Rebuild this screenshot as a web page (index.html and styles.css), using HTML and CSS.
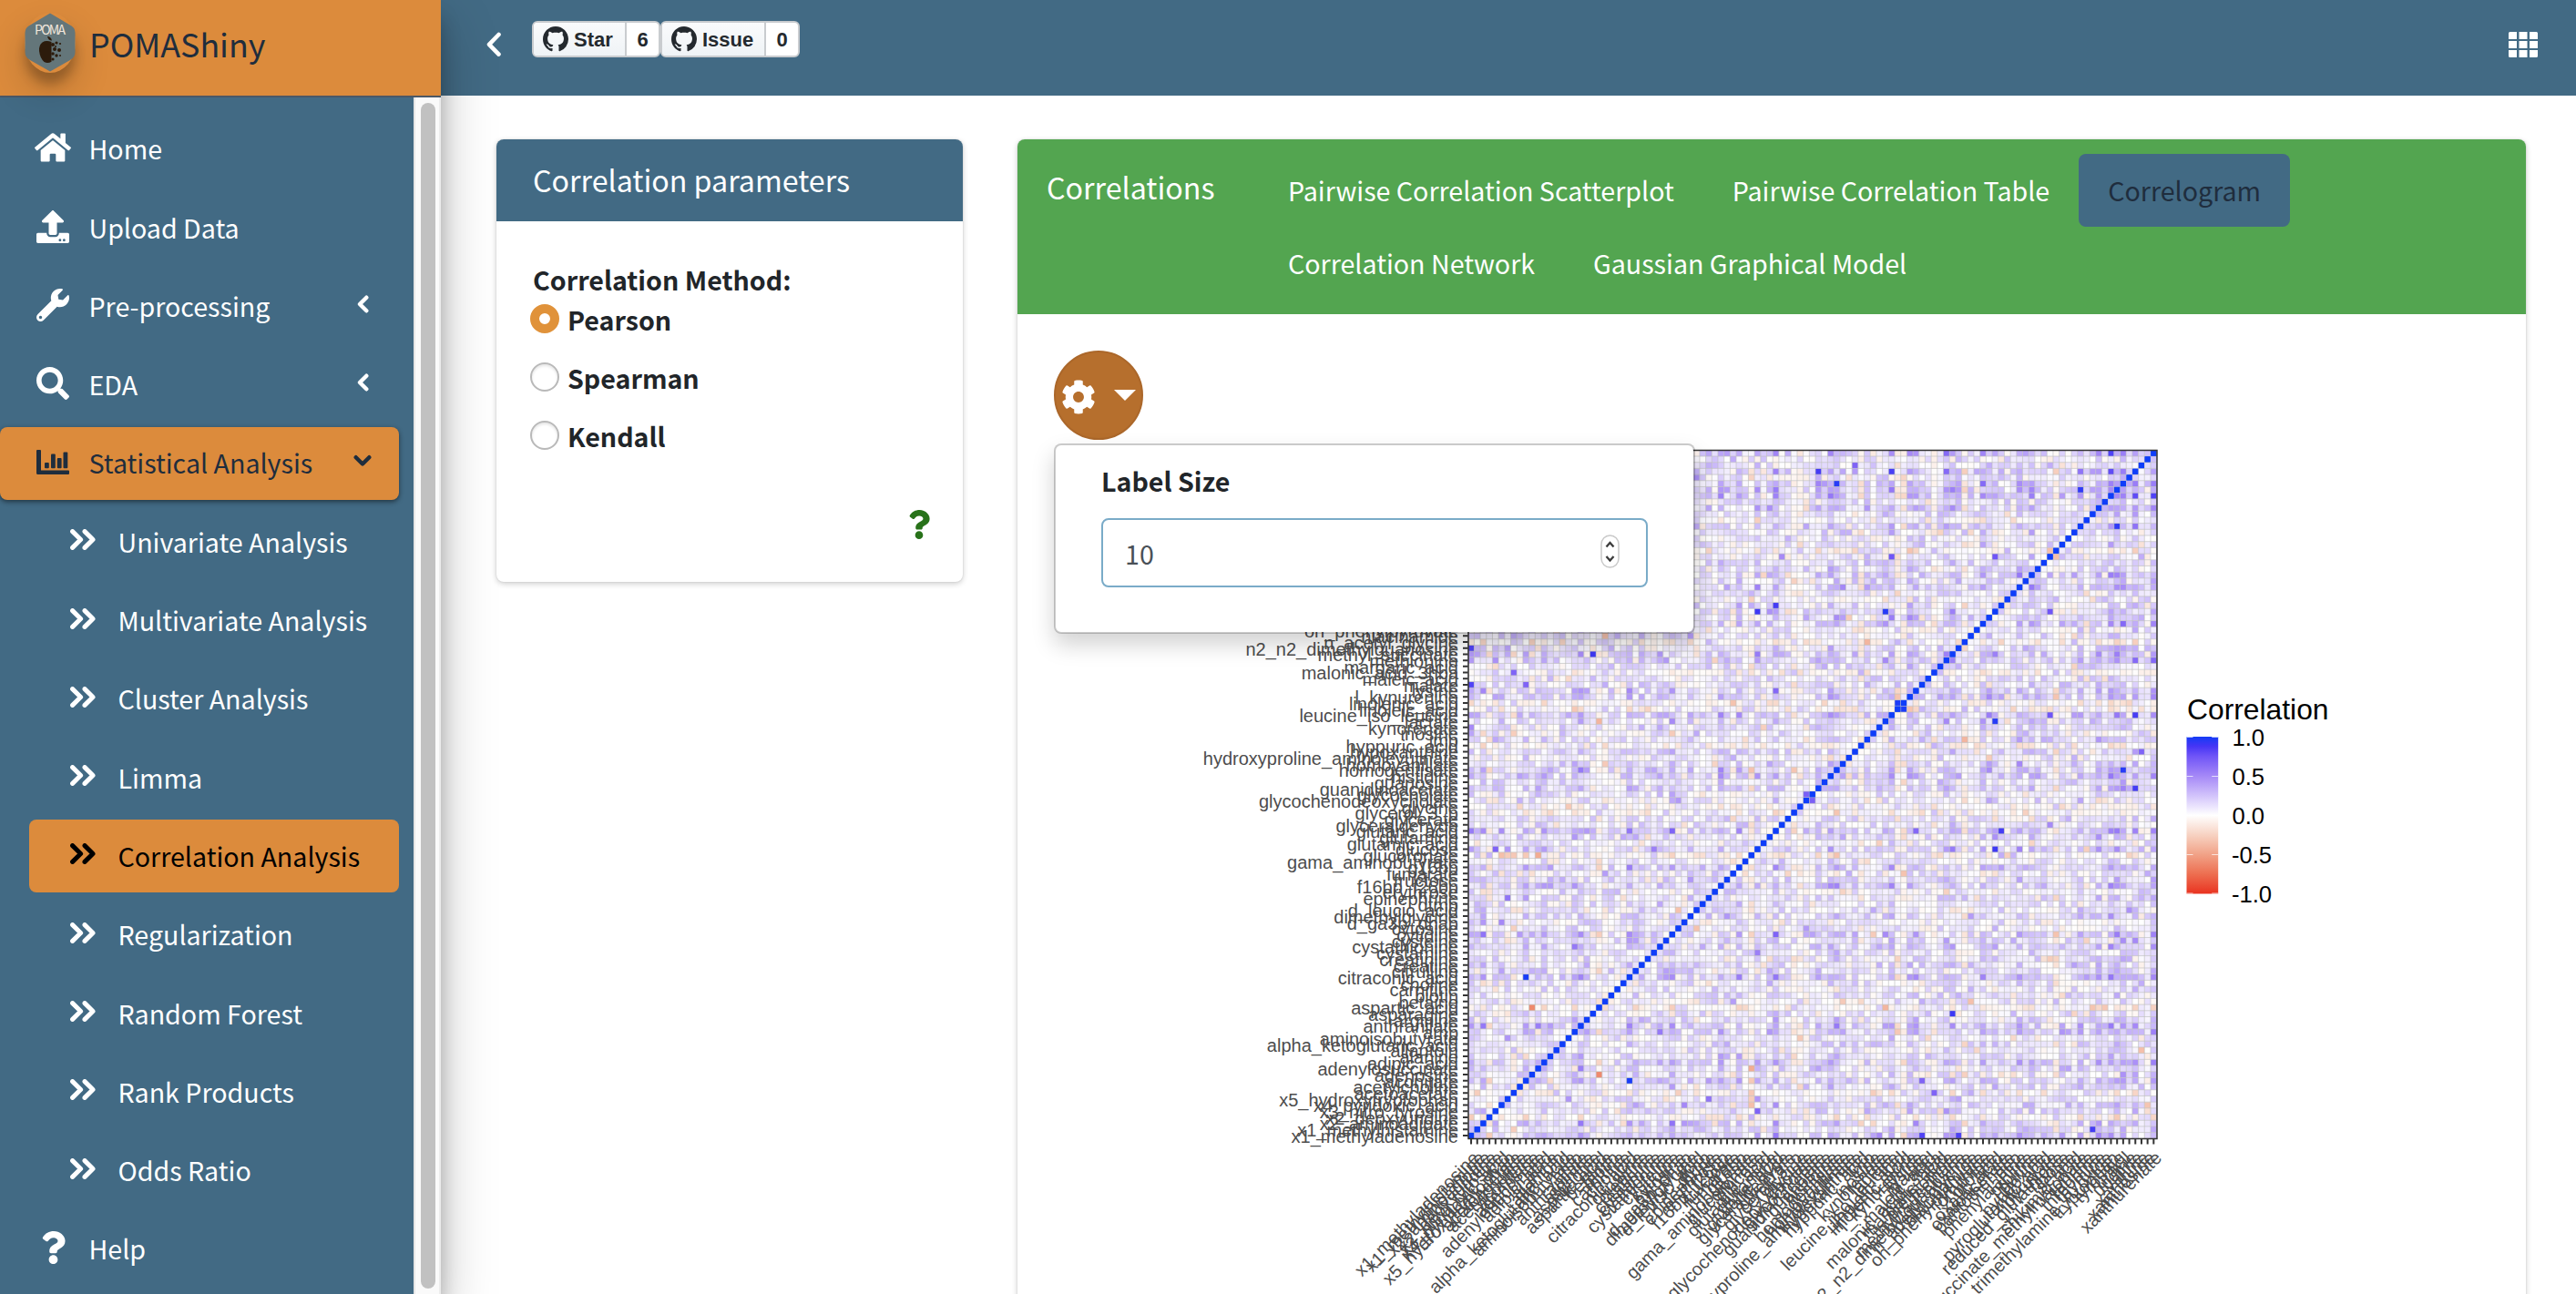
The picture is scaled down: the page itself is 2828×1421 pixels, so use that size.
FILE: index.html
```
<!DOCTYPE html>
<html lang="en">
<head>
<meta charset="utf-8">
<title>POMAShiny</title>
<link rel="stylesheet" href="styles.css">
</head>
<body>
<svg class="defs" width="0" height="0" aria-hidden="true">
  <symbol id="i-home" viewBox="0 0 576 512"><path d="M280.37 148.26L96 300.11V464a16 16 0 0 0 16 16l112.06-.29a16 16 0 0 0 15.92-16V368a16 16 0 0 1 16-16h64a16 16 0 0 1 16 16v95.64a16 16 0 0 0 16 16.05L464 480a16 16 0 0 0 16-16V300L295.67 148.26a12.19 12.19 0 0 0-15.3 0zM571.6 251.47L488 182.56V44.05a12 12 0 0 0-12-12h-56a12 12 0 0 0-12 12v72.61L318.47 43a48 48 0 0 0-61 0L4.34 251.47a12 12 0 0 0-1.6 16.9l25.5 31A12 12 0 0 0 45.15 301l235.22-193.74a12.19 12.19 0 0 1 15.3 0L530.9 301a12 12 0 0 0 16.9-1.6l25.5-31a12 12 0 0 0-1.7-16.93z"/></symbol>
  <symbol id="i-upload" viewBox="0 0 512 512"><path d="M296 384h-80c-13.3 0-24-10.7-24-24V192h-87.7c-17.8 0-26.7-21.5-14.1-34.1L242.3 5.7c7.5-7.5 19.8-7.5 27.3 0l152.2 152.2c12.6 12.6 3.7 34.1-14.1 34.1H320v168c0 13.3-10.7 24-24 24zm216-8v112c0 13.3-10.7 24-24 24H24c-13.3 0-24-10.7-24-24V376c0-13.3 10.7-24 24-24h136v8c0 30.9 25.1 56 56 56h80c30.9 0 56-25.1 56-56v-8h136c13.3 0 24 10.7 24 24zm-124 88c0-11-9-20-20-20s-20 9-20 20 9 20 20 20 20-9 20-20zm64 0c0-11-9-20-20-20s-20 9-20 20 9 20 20 20 20-9 20-20z"/></symbol>
  <symbol id="i-wrench" viewBox="0 0 512 512"><path d="M507.73 109.1c-2.24-9.03-13.54-12.09-20.12-5.51l-74.36 74.36-67.88-11.31-11.31-67.88 74.36-74.36c6.62-6.62 3.43-17.9-5.66-20.16-47.38-11.74-99.55.91-136.58 37.93-39.64 39.64-50.55 97.1-34.05 147.2L18.74 402.76c-24.99 24.99-24.99 65.51 0 90.5 24.99 24.99 65.51 24.99 90.5 0l213.21-213.21c50.12 16.71 107.47 5.68 147.37-34.22 37.07-37.07 49.7-89.32 37.91-136.73zM64 472c-13.25 0-24-10.75-24-24 0-13.26 10.75-24 24-24s24 10.74 24 24c0 13.25-10.75 24-24 24z"/></symbol>
  <symbol id="i-search" viewBox="0 0 512 512"><path d="M505 442.7L405.3 343c-4.5-4.5-10.6-7-17-7H372c27.6-35.3 44-79.7 44-128C416 93.1 322.9 0 208 0S0 93.1 0 208s93.1 208 208 208c48.3 0 92.7-16.4 128-44v16.3c0 6.4 2.5 12.5 7 17l99.7 99.7c9.4 9.4 24.6 9.4 33.9 0l28.3-28.3c9.4-9.4 9.4-24.6.1-34zM208 336c-70.7 0-128-57.2-128-128 0-70.7 57.2-128 128-128 70.7 0 128 57.2 128 128 0 70.7-57.2 128-128 128z"/></symbol>
  <symbol id="i-chart" viewBox="0 0 36 36"><path d="M1 5h3a1 1 0 0 1 1 1v21.500h30a1 1 0 0 1 1 1v2.500a1 1 0 0 1-1 1H1.500a1.500 1.500 0 0 1-1.500-1.500V6a1 1 0 0 1 1-1z"/><rect x="9" y="19" width="4.800" height="6.200" rx="1"/><rect x="16" y="9.500" width="4.800" height="15.700" rx="1"/><rect x="22.800" y="14" width="4.800" height="11.200" rx="1"/><rect x="29.500" y="7.500" width="4.800" height="17.700" rx="1"/></symbol>
  <symbol id="i-double" viewBox="0 0 28 23"><path d="M2.600 2.600l9 8.900-9 8.900M16 2.600l9 8.900-9 8.900" fill="none" stroke="currentColor" stroke-width="5" stroke-linejoin="round" stroke-linecap="round"/></symbol>
  <symbol id="i-left" viewBox="0 0 14 20"><path d="M11.300 2.700L4 10l7.300 7.300" fill="none" stroke="currentColor" stroke-width="4.400" stroke-linejoin="round" stroke-linecap="round"/></symbol>
  <symbol id="i-down" viewBox="0 0 20 14"><path d="M2.700 3.200L10 10.500l7.300-7.300" fill="none" stroke="currentColor" stroke-width="4.400" stroke-linejoin="round" stroke-linecap="round"/></symbol>
  <symbol id="i-question" viewBox="0 0 384 512"><path d="M202.021 0C122.202 0 70.503 32.703 29.914 91.026c-7.363 10.58-5.093 25.086 5.178 32.874l43.138 32.709c10.373 7.865 25.132 6.026 33.253-4.148 25.049-31.381 43.63-49.449 82.757-49.449 30.764 0 68.816 19.799 68.816 49.631 0 22.552-18.617 34.134-48.993 51.164-35.423 19.86-82.299 44.576-82.299 106.405V320c0 13.255 10.745 24 24 24h72.471c13.255 0 24-10.745 24-24v-5.773c0-42.86 125.268-44.645 125.268-160.627C377.504 66.256 286.902 0 202.021 0zM192 373.459c-38.196 0-69.271 31.075-69.271 69.271 0 38.195 31.075 69.27 69.271 69.27s69.271-31.075 69.271-69.271-31.075-69.27-69.271-69.27z"/></symbol>
  <symbol id="i-cog" viewBox="0 0 512 512"><path d="M487.4 315.7l-42.6-24.6c4.3-23.2 4.3-47 0-70.2l42.6-24.6c4.9-2.8 7.1-8.6 5.5-14-11.1-35.6-30-67.8-54.7-94.6-3.8-4.1-10-5.1-14.8-2.3L380.8 110c-17.9-15.4-38.5-27.3-60.8-35.1V25.8c0-5.6-3.9-10.5-9.4-11.7-36.7-8.2-74.3-7.8-109.2 0-5.5 1.2-9.4 6.1-9.4 11.7V75c-22.2 7.900-42.8 19.8-60.8 35.1L88.7 85.5c-4.9-2.8-11-1.900-14.8 2.3-24.7 26.7-43.6 58.900-54.7 94.6-1.7 5.4.6 11.2 5.5 14L67.3 221c-4.300 23.2-4.300 47 0 70.2l-42.6 24.6c-4.900 2.8-7.1 8.6-5.5 14 11.1 35.6 30 67.8 54.7 94.6 3.8 4.1 10 5.1 14.8 2.3l42.6-24.6c17.9 15.4 38.5 27.3 60.8 35.1v49.2c0 5.6 3.9 10.5 9.4 11.700 36.7 8.2 74.3 7.8 109.2 0 5.5-1.2 9.4-6.1 9.4-11.700v-49.2c22.2-7.9 42.8-19.8 60.8-35.1l42.6 24.6c4.9 2.8 11 1.900 14.8-2.3 24.7-26.7 43.6-58.900 54.7-94.6 1.5-5.5-.7-11.3-5.6-14.1zM256 336c-44.1 0-80-35.9-80-80s35.9-80 80-80 80 35.9 80 80-35.9 80-80 80z"/></symbol>
  <symbol id="i-github" viewBox="0 0 16 16"><path d="M8 0C3.58 0 0 3.58 0 8c0 3.54 2.29 6.53 5.47 7.59.4.07.55-.17.55-.38 0-.19-.01-.82-.01-1.49-2.01.37-2.53-.49-2.69-.94-.09-.23-.48-.94-.82-1.13-.28-.15-.68-.52-.01-.53.63-.01 1.08.58 1.23.82.72 1.21 1.87.87 2.33.66.07-.52.28-.87.51-1.07-1.78-.2-3.64-.89-3.64-3.95 0-.87.31-1.59.82-2.15-.08-.2-.36-1.02.08-2.12 0 0 .67-.21 2.2.82.64-.18 1.32-.27 2-.27s1.36.09 2 .27c1.53-1.04 2.2-.82 2.2-.82.44 1.1.16 1.92.08 2.12.51.56.82 1.27.82 2.15 0 3.07-1.87 3.75-3.65 3.95.29.25.54.73.54 1.48 0 1.07-.01 1.93-.01 2.2 0 .21.15.46.55.38A8.01 8.01 0 0 0 16 8c0-4.42-3.58-8-8-8z"/></symbol>
  <symbol id="i-grid" viewBox="0 0 32 28"><path d="M0 1.500Q0 0 1.500 0H9v8H0zM11.500 0h9v8h-9zM23 0h7.500Q32 0 32 1.500V8h-9zM0 10h9v8H0zM11.500 10h9v8h-9zM23 10h9v8h-9zM0 20h9v8H1.500Q0 28 0 26.500zM11.500 20h9v8h-9zM23 20h9v6.500q0 1.500-1.500 1.500H23z"/></symbol>
</svg>

<div class="app">
  <aside class="sidebar">
    <a class="brand">
      <span class="brand-logo">
        <svg viewBox="0 0 56 66" width="56" height="66">
          <path d="M28 .5L49 13Q55.500 16 55.500 22V43Q55.500 49 50 52L28 64.500 6 52Q.5 49 .5 43V22Q.5 16 7 13z" fill="#64767a"/>
          <text x="28" y="24" text-anchor="middle" textLength="34" class="logo-text">POMA</text>
          <path d="M25 26q4 0 5 4.500-4 0-5-4.500zM29.500 32q-6-2-10 .5-4 3-3.500 9.500 1 8 5.500 12 4 2 8-.3z" fill="#2c1b0c"/>
          <g fill="#2c1b0c"><circle cx="31" cy="35" r="2"/><circle cx="35" cy="33" r="1.600"/><circle cx="39" cy="34" r="1.100"/><circle cx="33" cy="40" r="2"/><circle cx="38" cy="41" r="2"/><circle cx="31" cy="45" r="1.800"/><circle cx="35" cy="47" r="1.700"/><circle cx="39" cy="47" r="1"/><circle cx="31" cy="51" r="1.600"/><circle cx="34" cy="37" r="1"/></g>
        </svg>
      </span>
      <span class="brand-name">POMAShiny</span>
    </a>
    <div class="side-body">
      <nav class="menu">
        <a class="item"><span class="ico"><svg width="40" height="36"><use href="#i-home"/></svg></span><span>Home</span></a>
        <a class="item"><span class="ico"><svg width="36" height="36"><use href="#i-upload"/></svg></span><span>Upload Data</span></a>
        <a class="item"><span class="ico"><svg width="36" height="36"><use href="#i-wrench"/></svg></span><span>Pre-processing</span><svg class="caret" width="14" height="20"><use href="#i-left"/></svg></a>
        <a class="item"><span class="ico"><svg width="36" height="36"><use href="#i-search"/></svg></span><span>EDA</span><svg class="caret" width="14" height="20"><use href="#i-left"/></svg></a>
        <a class="item open"><span class="ico"><svg width="36" height="36"><use href="#i-chart"/></svg></span><span>Statistical Analysis</span><svg class="caret caret-down" width="20" height="14"><use href="#i-down"/></svg></a>
        <a class="item sub"><svg class="dbl" width="28" height="23"><use href="#i-double"/></svg><span>Univariate Analysis</span></a>
        <a class="item sub"><svg class="dbl" width="28" height="23"><use href="#i-double"/></svg><span>Multivariate Analysis</span></a>
        <a class="item sub"><svg class="dbl" width="28" height="23"><use href="#i-double"/></svg><span>Cluster Analysis</span></a>
        <a class="item sub"><svg class="dbl" width="28" height="23"><use href="#i-double"/></svg><span>Limma</span></a>
        <a class="item sub active"><svg class="dbl" width="28" height="23"><use href="#i-double"/></svg><span>Correlation Analysis</span></a>
        <a class="item sub"><svg class="dbl" width="28" height="23"><use href="#i-double"/></svg><span>Regularization</span></a>
        <a class="item sub"><svg class="dbl" width="28" height="23"><use href="#i-double"/></svg><span>Random Forest</span></a>
        <a class="item sub"><svg class="dbl" width="28" height="23"><use href="#i-double"/></svg><span>Rank Products</span></a>
        <a class="item sub"><svg class="dbl" width="28" height="23"><use href="#i-double"/></svg><span>Odds Ratio</span></a>
        <a class="item"><span class="ico"><svg width="27" height="36"><use href="#i-question"/></svg></span><span>Help</span></a>
      </nav>
      <div class="scroll-track"><div class="scroll-thumb"></div></div>
    </div>
  </aside>

  <div class="page">
    <header class="topbar">
      <svg class="back" width="18" height="28" viewBox="0 0 18 28"><path d="M14.500 3L4 13.800l10.500 10.800" fill="none" stroke="currentColor" stroke-width="4.600" stroke-linecap="round" stroke-linejoin="round"/></svg>
      <div class="badges">
        <div class="badge-gh"><span class="gh-label"><svg width="28" height="28"><use href="#i-github"/></svg>Star</span><span class="gh-count">6</span></div>
        <div class="badge-gh"><span class="gh-label gh-issue"><svg width="28" height="28"><use href="#i-github"/></svg>Issue</span><span class="gh-count">0</span></div>
      </div>
      <svg class="apps" width="32" height="28"><use href="#i-grid"/></svg>
    </header>

    <main class="content">
      <section class="card params">
        <h3 class="params-head">Correlation parameters</h3>
        <div class="params-body">
          <div class="field-label">Correlation Method:</div>
          <label class="radio"><span class="dot on"></span>Pearson</label>
          <label class="radio"><span class="dot"></span>Spearman</label>
          <label class="radio"><span class="dot"></span>Kendall</label>
          <svg class="help" width="24" height="32"><use href="#i-question"/></svg>
        </div>
      </section>

      <section class="card result">
        <div class="tabs-head">
          <h3 class="tabs-title">Correlations</h3>
          <ul class="tabs">
            <li>Pairwise Correlation Scatterplot</li>
            <li>Pairwise Correlation Table</li>
            <li class="on">Correlogram</li>
            <li>Correlation Network</li>
            <li>Gaussian Graphical Model</li>
          </ul>
        </div>
        <div class="result-body">
          <div class="dropdown">
            <button class="gear" type="button"><svg width="38" height="38"><use href="#i-cog"/></svg><span class="tri"></span></button>
            <div class="popup">
              <div class="popup-label">Label Size</div>
              <div class="number"><span>10</span>
                <svg class="spin" width="22" height="38" viewBox="0 0 22 38"><rect x="1" y="1" width="19" height="35" rx="9.500" fill="#fff" stroke="#c9c9c9" stroke-width="1.500"/><path d="M6.500 13.500l4-4.500 4 4.500M6.500 24l4 4.500 4-4.500" fill="none" stroke="#3c3c3c" stroke-width="2.300"/></svg>
              </div>
            </div>
          </div>
          <svg id="plot" class="plot" width="1656" height="938" viewBox="1117 483 1656 938">
            <defs>
              <linearGradient id="scale" x1="0" y1="0" x2="0" y2="1">
                <stop offset="0" stop-color="#143cf5"/><stop offset=".06" stop-color="#4535f5"/><stop offset=".125" stop-color="#7055f7"/><stop offset=".25" stop-color="#a588f7"/><stop offset=".375" stop-color="#d2c3fb"/><stop offset=".5" stop-color="#fff"/><stop offset=".625" stop-color="#f7d2c2"/><stop offset=".75" stop-color="#f1a287"/><stop offset=".875" stop-color="#ed6e50"/><stop offset="1" stop-color="#e93320"/>
              </linearGradient>
            </defs>
            <g id="cells"></g>
            <path class="frame" d="M1612 494.500H2368V1250.500H1612z"/>
            <path id="ticks" class="ticks"/>
            <g id="ylabels" class="axis"></g>
            <g id="xlabels" class="axis"></g>
            <g class="legend">
              <text x="2401" y="790" font-size="31.800">Correlation</text>
              <rect x="2400.500" y="809" width="34.700" height="172.500" fill="url(#scale)"/>
              <path class="legend-ticks" d="M2400.500 809.500h7m20.700 0h7M2400.500 852.500h7m20.700 0h7M2400.500 895.500h7m20.700 0h7M2400.500 938.500h7m20.700 0h7M2400.500 981h7m20.700 0h7"/>
              <text x="2450.500" y="819">1.0</text><text x="2450.500" y="862">0.5</text><text x="2450.500" y="905">0.0</text><text x="2450" y="948">-0.5</text><text x="2450" y="991">-1.0</text>
            </g>
          </svg>
        </div>
      </section>
    </main>
  </div>
</div>
<script src="plot.js"></script>
</body>
</html>
```
FILE: styles.css
```
* { box-sizing: border-box; }
body {
  margin: 0;
  width: 2828px;
  height: 1421px;
  overflow: hidden;
  font-family: "Noto Sans CJK SC", "Noto Sans", sans-serif;
  font-size: 28.620px;
  line-height: 48px;
  color: #212529;
  background: #fff;
}
h3, ul { margin: 0; padding: 0; font-weight: 400; list-style: none; }
svg { display: block; fill: currentColor; flex: none; }
.defs { position: absolute; }
.app { display: flex; width: 2828px; height: 1421px; overflow: hidden; }

/* sidebar */
.sidebar {
  position: relative;
  z-index: 2;
  display: flex;
  flex-direction: column;
  width: 484px;
  height: 1421px;
  flex: none;
  background: #426a84;
  box-shadow: 0 28px 56px rgba(0,0,0,.25), 0 20px 20px rgba(0,0,0,.22);
}
.brand {
  display: flex;
  align-items: flex-start;
  height: 107px;
  padding: 14px 0 0 27px;
  background: #dc8b3c;
  border-bottom: 2px solid #4b5866;
}
.brand-logo {
  width: 56px;
  height: 66px;
  border-radius: 50%;
  box-shadow: 0 20px 40px rgba(0,0,0,.19), 0 12px 12px rgba(0,0,0,.23);
}
.brand-name { margin: 7px 0 0 15px; font-size: 35.800px; line-height: 52px; color: #1f2d3d; }
.logo-text { font-size: 14px; fill: #f1e6dc; }
.side-body { display: flex; flex: 1; min-height: 0; }
.menu { display: flex; flex-direction: column; gap: 6.300px; width: 454px; padding: 16.800px 16px 0 0; }
.item {
  display: flex;
  align-items: center;
  flex: none;
  height: 80px;
  padding: 0 33px 0 38px;
  color: #fff;
  border-radius: 8px;
  white-space: nowrap;
}
.item > span:not(.ico) { margin-top: -1px; }
.ico { display: flex; justify-content: center; width: 40px; margin: -3px 19.500px 0 0; }
.caret { margin: -5px 0 0 auto; }
.caret-down { margin-right: -3px; }
.open { color: #1f2d3d; background: #dc8b3c; box-shadow: 0 2px 6px rgba(0,0,0,.24), 0 2px 4px rgba(0,0,0,.3); }
.sub { margin-left: 32px; padding-left: 44.500px; }
.dbl { margin: -5px 25px 0 0; }
.active { color: #000; background: #dc8b3c; }
.scroll-track { width: 30px; padding: 6px 6px 6px 6px; background: #fafafa; border-left: 2px solid #e6e6e6; border-right: 2px solid #ececec; }
.scroll-thumb { width: 16px; height: 1302px; border-radius: 8px; background: #c1c1c1; }

/* top bar */
.page { flex: 1; min-width: 0; }
.topbar { display: flex; align-items: flex-start; height: 105px; padding: 0 42px 0 49px; color: #fff; background: #426a84; }
.back { margin-top: 35px; }
.badges { display: flex; gap: 0; margin: 23px 0 0 33px; font: bold 22px/36px "Liberation Sans", Arial, sans-serif; color: #24292e; }
.badge-gh { display: flex; height: 40px; background: #fff; border: 2px solid #c9cccf; border-radius: 6px; overflow: hidden; }
.gh-label { display: flex; align-items: center; gap: 6px; width: 102px; padding: 1px 0 0 10px; background: linear-gradient(#fafbfc, #eff3f6); border-right: 2px solid #c9cccf; }
.gh-label svg { margin-top: -2px; }
.gh-issue { width: 114px; }
.gh-count { width: 35px; padding-top: 1px; text-align: center; }
.apps { margin: 35px 0 0 auto; }

/* cards */
.content { display: flex; align-items: flex-start; gap: 60px; padding: 48px 55px 0 61px; }
.card { border-radius: 8px; background: #fff; box-shadow: 0 0 2px rgba(0,0,0,.125), 0 2px 6px rgba(0,0,0,.2); }
.params { width: 512px; height: 486px; }
.params-head { height: 90px; padding: 20px 40px 0; font-size: 32.200px; line-height: 48px; color: #fff; background: #426a84; border-radius: 8px 8px 0 0; }
.params-body { display: flex; flex-direction: column; padding: 40px 37px 0; font-weight: 700; }
.field-label { height: 44px; padding-left: 3px; }
.radio { display: flex; align-items: center; height: 64px; margin-bottom: 0; }
.radio:first-of-type { margin-top: -8px; }
.dot { width: 32px; height: 32px; margin: -2px 9px 0 0; border: 2px solid #b9b9b9; border-radius: 50%; background: #fff; box-shadow: inset 0 2px 3px rgba(0,0,0,.1); }
.dot.on { border: 10.500px solid #e0923a; box-shadow: none; }
.help { align-self: flex-end; margin: 49px -1px 0 0; color: #28721a; }

.result { width: 1656px; height: 1400px; }
.tabs-head { display: flex; height: 192px; padding: 16px 0 0 32px; color: #fff; background: #53a550; border-radius: 8px 8px 0 0; }
.tabs-title { width: 233px; padding-top: 12px; font-size: 32.200px; line-height: 48px; }
.tabs { display: flex; flex-wrap: wrap; align-content: flex-start; width: 1390px; }
.tabs li { height: 80px; padding: 16px 32px 0; line-height: 48px; border-radius: 8px; white-space: nowrap; }
.tabs .on { color: #1f2d3d; background: #426a84; }
.result-body { padding-top: 40px; }
.dropdown { position: relative; width: 98px; height: 98px; margin-left: 40px; }
.gear { display: flex; align-items: center; width: 98px; height: 98px; padding: 4px 0 0 6px; color: #fff; background: #b66f2d; border: 2px solid #ab672a; border-radius: 50%; }
.tri { margin: -4px 0 0 20px; border: 12px solid transparent; border-top-color: #fff; border-bottom: 0; }
.popup {
  position: absolute;
  left: 0;
  top: 102px;
  z-index: 3;
  width: 704px;
  height: 209px;
  padding: 16px 50px;
  background: #fff;
  background-clip: padding-box;
  border: 2px solid rgba(0,0,0,.2);
  border-radius: 8px;
  box-shadow: 0 12px 24px rgba(0,0,0,.175);
}
.popup-label { height: 64px; font-weight: 700; margin-top: -1px; padding-bottom: 1px; }
.number { display: flex; align-items: center; width: 600px; height: 76px; margin-top: 1px; padding: 0 28px 0 24px; border: 2px solid #7aabc8; border-radius: 8px; color: #495057; }
.number span { margin-top: 1px; }
.spin { margin: -2px 0 0 auto; }

/* correlogram */
.plot { font-family: "Liberation Sans", Arial, sans-serif; overflow: hidden; }
.frame { fill: none; stroke: #333; stroke-width: 1.500; }
.ticks { fill: none; stroke: #333; stroke-width: 2; }
.axis { font-size: 20px; fill: #4d4d4d; }
.legend { font-size: 25.600px; fill: #000; }
.legend-ticks { fill: none; stroke: #fff; stroke-width: 1; opacity: .7; }
```
FILE: plot.js
```
const names = `x1_methyladenosine x1_methylhistamine x2_aminoadipate x2_deoxyuridine x3_nitro_tyrosine x4_pyridoxic_acid x5_hydroxytryptophan acetoacetate acetylcholine aconitate adenosine adenylosuccinate adipic_acid alanine allantoin alpha_ketoglutaric_acid aminoisobutyrate amp anthranilate arginine asparagine aspartic_acid betaine biotin carnitine choline citraconic_acid citrulline creatine creatinine cystamine cystathionine cysteine cytidine cytosine d_ga3p_dhap dimethylglycine d_leucic_acid dtmp epinephrine erythrose f16bp_f26bp fructose fumarate g16bp gama_aminobutyrate glucoronate glucose glutamic_acid glutamine glutaric_acid glyceraldehyde glycerate glycerol_3_p glycine glycochenodeoxycholate glycocholate guanidinoacetate guanosine histidine homogentisate homovanillate hydroxyproline_aminolevulinate hypoxanthine hyppuric_acid imp inosine kynorenate lactate leucine_iso_leucine linoleic_acid linolenic_acid l_kynurenine lysine malate maleic_acid malonic_acid_3hba margaric_acid methionine methyl_succinate n2_n2_dimethylguanosine n_acetyl_glycine niacinamide oh_phenylpyruvate ornithine orotate oxalic_acid oxaloacetate pantothenate pep phenylalanine proline purine pyridoxine pyroglutamic_acid pyruvate reduced_glutathione ribose serine shikimic_acid succinate_methylmalonate taurine threonine thymine trimethylamine_n_oxide tryptophan tyrosine uracil uridine valine xanthine xanthosine xanthurenate`.split(' ');
const N = names.length, X0 = 1611.7, Y0 = 1250.3, P = 6.69;

// Colour scale stops over correlation -1 … 1
const stops = [[-1, 233, 51, 32], [-.75, 237, 110, 80], [-.5, 241, 162, 135], [-.25, 247, 210, 194], [0, 255, 255, 255],
  [.25, 210, 195, 251], [.5, 165, 136, 247], [.75, 112, 85, 247], [.9, 62, 56, 245], [1, 15, 61, 250]];
function color(v) {
  let k = 1;
  while (k < stops.length - 1 && v > stops[k][0]) k++;
  const a = stops[k - 1], b = stops[k], t = (v - a[0]) / (b[0] - a[0]);
  return 'rgb(' + [1, 2, 3].map(j => Math.round(a[j] + (b[j] - a[j]) * t)).join(',') + ')';
}

let seed = 20117;
function rnd() {
  seed = (seed + 0x6D2B79F5) | 0;
  let t = Math.imul(seed ^ (seed >>> 15), 1 | seed);
  t = (t + Math.imul(t ^ (t >>> 7), 61 | t)) ^ t;
  return ((t ^ (t >>> 14)) >>> 0) / 4294967296;
}
const gauss = () => Math.sqrt(-2 * Math.log(rnd() + 1e-9)) * Math.cos(6.2832 * rnd());

// Metabolite loadings: strongly co-varying group, opposing group, and the rest
const strong = new Set([0, 2, 9, 12, 17, 18, 26, 31, 33, 41, 44, 47, 50, 57, 59, 60, 69, 72, 73, 78, 79, 84, 90, 92, 100, 103, 105, 106, 107, 109, 112]);
const inverse = new Set([3, 7, 21, 46, 53, 54, 64, 70, 71, 76, 81, 96]);
const load = names.map((_, i) => (strong.has(i) ? .46 + .12 * rnd() : inverse.has(i) ? -.2 - .1 * rnd() : .02 + .3 * rnd()) + (i > 104 && strong.has(i) ? .12 : 0));
const load2 = names.map(() => gauss() * .17);
const fixed = { '9,26': .98, '10,21': -.62, '2,33': .6, '60,107': .95, '57,109': .88, '69,109': .87, '100,106': .93, '105,112': .85,
  '69,95': .75, '86,95': .75, '68,86': .95, '50,87': .88, '47,86': .9, '20,79': .9, '0,80': .85, '7,76': .68, '9,74': .68, '4,47': .68,
  '63,110': .68, '1,102': .88, '70,71': .97, '55,56': .7, '0,74': .85, '105,109': .8, '5,46': -.35, '6,46': -.28, '7,46': -.3, '11,46': -.45,
  '6,39': .6, '5,35': .5, '11,18': .55, '95,96': -.35 };
const svg = [];
for (let i = 0; i < N; i++) {
  for (let j = 0; j <= i; j++) {
    let v = i === j ? 1 : .055 + load[i] * load[j] + load2[i] * load2[j] + gauss() * .11;
    if (i !== j) v = Math.max(-.4, Math.min(.7, v));
    if (fixed[j + ',' + i] !== undefined) v = fixed[j + ',' + i];
    const c = color(v);
    svg.push([i, j, c]);
    if (i !== j) svg.push([j, i, c]);
  }
}
const grid = [];
for (let k = 0; k <= N; k++) {
  grid.push(`M${(X0 + k * P).toFixed(2)} ${(Y0 - N * P).toFixed(2)}V${Y0}M${X0} ${(Y0 - k * P).toFixed(2)}H${(X0 + N * P).toFixed(2)}`);
}
const rect = ([c, r, f], inset) => `<rect x="${(X0 + c * P + inset).toFixed(2)}" y="${(Y0 - (r + 1) * P + inset).toFixed(2)}" width="${P - 2 * inset}" height="${P - 2 * inset}" fill="${f}"/>`;
document.getElementById('cells').innerHTML =
  svg.map(s => rect(s, 0)).join('') +
  `<path d="${grid.join('')}" fill="none" stroke="#bebebe" stroke-width=".9" opacity=".72"/>` +
  svg.filter(s => s[0] === s[1]).map(s => rect(s, .3)).join('');

let ticks = '', yl = '', xl = '';
names.forEach((n, i) => {
  const x = X0 + (i + .5) * P, y = Y0 - (i + .5) * P;
  ticks += `M${x.toFixed(2)} 1251V1256.500M1606 ${y.toFixed(2)}H1611.500`;
  yl += `<text x="1601" y="${(y + 7.9).toFixed(2)}" text-anchor="end">${n}</text>`;
  xl += `<text transform="translate(${(x + 10).toFixed(2)} 1273) rotate(-45)" text-anchor="end">${n}</text>`;
});
document.getElementById('ticks').setAttribute('d', ticks);
document.getElementById('ylabels').innerHTML = yl;
document.getElementById('xlabels').innerHTML = xl;
```
